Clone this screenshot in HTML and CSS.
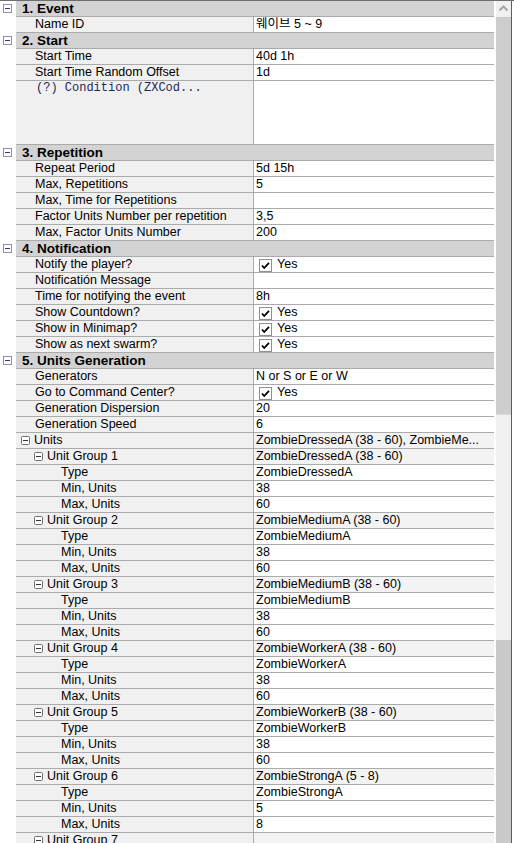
FILE: index.html
```html
<!DOCTYPE html>
<html>
<head>
<meta charset="utf-8">
<link rel="stylesheet" href="styles.css">
</head>
<body>
<div class="frame">
  <div class="grid">
    <div class="row cat"><div class="margin"><svg class="exp" width="9" height="9" viewBox="0 0 9 9"><rect x="0.5" y="0.5" width="8" height="8" fill="#fff" stroke="#8a96aa"/><line x1="2" y1="4.5" x2="7" y2="4.5" stroke="#2c3c64"/></svg></div><div class="label">1. Event</div></div>
    <div class="row"><div class="margin"></div><div class="name">Name ID</div><div class="value">웨이브 5 ~ 9</div></div>
    <div class="row cat"><div class="margin"><svg class="exp" width="9" height="9" viewBox="0 0 9 9"><rect x="0.5" y="0.5" width="8" height="8" fill="#fff" stroke="#8a96aa"/><line x1="2" y1="4.5" x2="7" y2="4.5" stroke="#2c3c64"/></svg></div><div class="label">2. Start</div></div>
    <div class="row"><div class="margin"></div><div class="name">Start Time</div><div class="value">40d 1h</div></div>
    <div class="row"><div class="margin"></div><div class="name">Start Time Random Offset</div><div class="value">1d</div></div>
    <div class="row tall"><div class="margin"></div><div class="name mono">(?) Condition (ZXCod...</div><div class="value"></div></div>
    <div class="row cat"><div class="margin"><svg class="exp" width="9" height="9" viewBox="0 0 9 9"><rect x="0.5" y="0.5" width="8" height="8" fill="#fff" stroke="#8a96aa"/><line x1="2" y1="4.5" x2="7" y2="4.5" stroke="#2c3c64"/></svg></div><div class="label">3. Repetition</div></div>
    <div class="row"><div class="margin"></div><div class="name">Repeat Period</div><div class="value">5d 15h</div></div>
    <div class="row"><div class="margin"></div><div class="name">Max, Repetitions</div><div class="value">5</div></div>
    <div class="row"><div class="margin"></div><div class="name">Max, Time for Repetitions</div><div class="value"></div></div>
    <div class="row"><div class="margin"></div><div class="name">Factor Units Number per repetition</div><div class="value">3,5</div></div>
    <div class="row"><div class="margin"></div><div class="name">Max, Factor Units Number</div><div class="value">200</div></div>
    <div class="row cat"><div class="margin"><svg class="exp" width="9" height="9" viewBox="0 0 9 9"><rect x="0.5" y="0.5" width="8" height="8" fill="#fff" stroke="#8a96aa"/><line x1="2" y1="4.5" x2="7" y2="4.5" stroke="#2c3c64"/></svg></div><div class="label">4. Notification</div></div>
    <div class="row"><div class="margin"></div><div class="name">Notify the player?</div><div class="value"><span class="check"><svg width="13" height="13" viewBox="0 0 13 13"><rect x="0.5" y="0.5" width="12" height="12" fill="#fff" stroke="#8e8f8f"/><path d="M3 6.5 L5.2 9 L10 3.8" fill="none" stroke="#000" stroke-width="1.8"/></svg></span>Yes</div></div>
    <div class="row"><div class="margin"></div><div class="name">Notificatión Message</div><div class="value"></div></div>
    <div class="row"><div class="margin"></div><div class="name">Time for notifying the event</div><div class="value">8h</div></div>
    <div class="row"><div class="margin"></div><div class="name">Show Countdown?</div><div class="value"><span class="check"><svg width="13" height="13" viewBox="0 0 13 13"><rect x="0.5" y="0.5" width="12" height="12" fill="#fff" stroke="#8e8f8f"/><path d="M3 6.5 L5.2 9 L10 3.8" fill="none" stroke="#000" stroke-width="1.8"/></svg></span>Yes</div></div>
    <div class="row"><div class="margin"></div><div class="name">Show in Minimap?</div><div class="value"><span class="check"><svg width="13" height="13" viewBox="0 0 13 13"><rect x="0.5" y="0.5" width="12" height="12" fill="#fff" stroke="#8e8f8f"/><path d="M3 6.5 L5.2 9 L10 3.8" fill="none" stroke="#000" stroke-width="1.8"/></svg></span>Yes</div></div>
    <div class="row"><div class="margin"></div><div class="name">Show as next swarm?</div><div class="value"><span class="check"><svg width="13" height="13" viewBox="0 0 13 13"><rect x="0.5" y="0.5" width="12" height="12" fill="#fff" stroke="#8e8f8f"/><path d="M3 6.5 L5.2 9 L10 3.8" fill="none" stroke="#000" stroke-width="1.8"/></svg></span>Yes</div></div>
    <div class="row cat"><div class="margin"><svg class="exp" width="9" height="9" viewBox="0 0 9 9"><rect x="0.5" y="0.5" width="8" height="8" fill="#fff" stroke="#8a96aa"/><line x1="2" y1="4.5" x2="7" y2="4.5" stroke="#2c3c64"/></svg></div><div class="label">5. Units Generation</div></div>
    <div class="row"><div class="margin"></div><div class="name">Generators</div><div class="value">N or S or E or W</div></div>
    <div class="row"><div class="margin"></div><div class="name">Go to Command Center?</div><div class="value"><span class="check"><svg width="13" height="13" viewBox="0 0 13 13"><rect x="0.5" y="0.5" width="12" height="12" fill="#fff" stroke="#8e8f8f"/><path d="M3 6.5 L5.2 9 L10 3.8" fill="none" stroke="#000" stroke-width="1.8"/></svg></span>Yes</div></div>
    <div class="row"><div class="margin"></div><div class="name">Generation Dispersion</div><div class="value">20</div></div>
    <div class="row"><div class="margin"></div><div class="name">Generation Speed</div><div class="value">6</div></div>
    <div class="row"><div class="margin"></div><div class="name lvl1"><svg class="exp" width="9" height="9" viewBox="0 0 9 9"><rect x="0.5" y="0.5" width="8" height="8" rx="1" fill="#fff" stroke="#6f6f6f"/><line x1="2" y1="4.5" x2="7" y2="4.5" stroke="#333"/></svg>Units</div><div class="value grp">ZombieDressedA (38 - 60), ZombieMe...</div></div>

    <div class="row"><div class="margin"></div><div class="name lvl2"><svg class="exp" width="9" height="9" viewBox="0 0 9 9"><rect x="0.5" y="0.5" width="8" height="8" rx="1" fill="#fff" stroke="#6f6f6f"/><line x1="2" y1="4.5" x2="7" y2="4.5" stroke="#333"/></svg>Unit Group 1</div><div class="value grp">ZombieDressedA (38 - 60)</div></div>
    <div class="row"><div class="margin"></div><div class="name lvl3">Type</div><div class="value">ZombieDressedA</div></div>
    <div class="row"><div class="margin"></div><div class="name lvl3">Min, Units</div><div class="value">38</div></div>
    <div class="row"><div class="margin"></div><div class="name lvl3">Max, Units</div><div class="value">60</div></div>

    <div class="row"><div class="margin"></div><div class="name lvl2"><svg class="exp" width="9" height="9" viewBox="0 0 9 9"><rect x="0.5" y="0.5" width="8" height="8" rx="1" fill="#fff" stroke="#6f6f6f"/><line x1="2" y1="4.5" x2="7" y2="4.5" stroke="#333"/></svg>Unit Group 2</div><div class="value grp">ZombieMediumA (38 - 60)</div></div>
    <div class="row"><div class="margin"></div><div class="name lvl3">Type</div><div class="value">ZombieMediumA</div></div>
    <div class="row"><div class="margin"></div><div class="name lvl3">Min, Units</div><div class="value">38</div></div>
    <div class="row"><div class="margin"></div><div class="name lvl3">Max, Units</div><div class="value">60</div></div>

    <div class="row"><div class="margin"></div><div class="name lvl2"><svg class="exp" width="9" height="9" viewBox="0 0 9 9"><rect x="0.5" y="0.5" width="8" height="8" rx="1" fill="#fff" stroke="#6f6f6f"/><line x1="2" y1="4.5" x2="7" y2="4.5" stroke="#333"/></svg>Unit Group 3</div><div class="value grp">ZombieMediumB (38 - 60)</div></div>
    <div class="row"><div class="margin"></div><div class="name lvl3">Type</div><div class="value">ZombieMediumB</div></div>
    <div class="row"><div class="margin"></div><div class="name lvl3">Min, Units</div><div class="value">38</div></div>
    <div class="row"><div class="margin"></div><div class="name lvl3">Max, Units</div><div class="value">60</div></div>

    <div class="row"><div class="margin"></div><div class="name lvl2"><svg class="exp" width="9" height="9" viewBox="0 0 9 9"><rect x="0.5" y="0.5" width="8" height="8" rx="1" fill="#fff" stroke="#6f6f6f"/><line x1="2" y1="4.5" x2="7" y2="4.5" stroke="#333"/></svg>Unit Group 4</div><div class="value grp">ZombieWorkerA (38 - 60)</div></div>
    <div class="row"><div class="margin"></div><div class="name lvl3">Type</div><div class="value">ZombieWorkerA</div></div>
    <div class="row"><div class="margin"></div><div class="name lvl3">Min, Units</div><div class="value">38</div></div>
    <div class="row"><div class="margin"></div><div class="name lvl3">Max, Units</div><div class="value">60</div></div>

    <div class="row"><div class="margin"></div><div class="name lvl2"><svg class="exp" width="9" height="9" viewBox="0 0 9 9"><rect x="0.5" y="0.5" width="8" height="8" rx="1" fill="#fff" stroke="#6f6f6f"/><line x1="2" y1="4.5" x2="7" y2="4.5" stroke="#333"/></svg>Unit Group 5</div><div class="value grp">ZombieWorkerB (38 - 60)</div></div>
    <div class="row"><div class="margin"></div><div class="name lvl3">Type</div><div class="value">ZombieWorkerB</div></div>
    <div class="row"><div class="margin"></div><div class="name lvl3">Min, Units</div><div class="value">38</div></div>
    <div class="row"><div class="margin"></div><div class="name lvl3">Max, Units</div><div class="value">60</div></div>

    <div class="row"><div class="margin"></div><div class="name lvl2"><svg class="exp" width="9" height="9" viewBox="0 0 9 9"><rect x="0.5" y="0.5" width="8" height="8" rx="1" fill="#fff" stroke="#6f6f6f"/><line x1="2" y1="4.5" x2="7" y2="4.5" stroke="#333"/></svg>Unit Group 6</div><div class="value grp">ZombieStrongA (5 - 8)</div></div>
    <div class="row"><div class="margin"></div><div class="name lvl3">Type</div><div class="value">ZombieStrongA</div></div>
    <div class="row"><div class="margin"></div><div class="name lvl3">Min, Units</div><div class="value">5</div></div>
    <div class="row"><div class="margin"></div><div class="name lvl3">Max, Units</div><div class="value">8</div></div>

    <div class="row"><div class="margin"></div><div class="name lvl2"><svg class="exp" width="9" height="9" viewBox="0 0 9 9"><rect x="0.5" y="0.5" width="8" height="8" rx="1" fill="#fff" stroke="#6f6f6f"/><line x1="2" y1="4.5" x2="7" y2="4.5" stroke="#333"/></svg>Unit Group 7</div><div class="value grp"></div></div>
  </div>
  <div class="scrollbar">
    <div class="arrow"><svg width="15" height="16" viewBox="0 0 15 16"><path d="M3.5 9.5 L7.5 5.5 L11.5 9.5" fill="none" stroke="#a6a6a6" stroke-width="2"/></svg></div>
    <div class="thumb"></div>
    <div class="track"></div>
    <div class="thumb2"></div>
  </div>
  <div class="edge"></div>
</div>
</body>
</html>
```

FILE: styles.css
```css
html, body {
  margin: 0;
  padding: 0;
  background: #ffffff;
}
body {
  width: 514px;
  height: 843px;
  overflow: hidden;
  font-family: "Liberation Sans", "Noto Sans CJK KR", Arial, sans-serif;
  font-size: 12.5px;
  color: #000;
}
.frame {
  display: flex;
  height: 843px;
  box-sizing: border-box;
  border-top: 1px solid #6e6e6e;
}
.grid {
  width: 494px;
  margin-right: 2px;
  display: flex;
  flex-direction: column;
  overflow: hidden;
  flex: none;
}
.row {
  display: flex;
  height: 16px;
  flex: none;
  line-height: 15px;
}
.row.tall {
  height: 64px;
}
.margin {
  width: 16px;
  flex: none;
  display: flex;
  align-items: center;
  padding-left: 3px;
  box-sizing: border-box;
  height: 15px;
}
.exp {
  display: block;
  flex: none;
}
.cat .label {
  flex: 1;
  background: #d3d3d3;
  border-bottom: 1px solid #ababab;
  font-weight: bold;
  font-size: 13.5px;
  padding-left: 6px;
  white-space: nowrap;
  overflow: hidden;
}
.name {
  flex: none;
  background: #f0f0f0;
  border-bottom: 1px solid #ababab;
  border-right: 1px solid #ababab;
  padding-left: 19px;
  box-sizing: border-box;
  width: 238px;
  white-space: nowrap;
  overflow: hidden;
  display: flex;
  align-items: flex-start;
}
.name.lvl1 {
  padding-left: 5px;
}
.name.lvl2 {
  padding-left: 18px;
}
.name.lvl3 {
  padding-left: 45px;
}
.name .exp {
  margin-top: 3px;
  margin-right: 4px;
}
.name.mono {
  font-family: "Liberation Mono", "Courier New", monospace;
  font-size: 12px;
  color: #1e2858;
  padding-left: 20px;
}
.value {
  flex: 1;
  background: #ffffff;
  border-bottom: 1px solid #ababab;
  padding-left: 2px;
  white-space: nowrap;
  overflow: hidden;
  display: flex;
  align-items: flex-start;
}
.value.grp {
  background: #f3f3f3;
}
.check {
  display: block;
  width: 13px;
  height: 13px;
  margin: 2px 5px 0 3px;
}
.check svg {
  display: block;
}
.scrollbar {
  width: 15px;
  flex: none;
  display: flex;
  flex-direction: column;
  background: #f0f0f0;
}
.arrow {
  height: 16px;
  flex: none;
  background: #f0f0f0;
}
.arrow svg {
  display: block;
}
.thumb {
  height: 398px;
  flex: none;
  background: #cdcdcd;
  border-bottom: 1px solid #dadada;
  box-sizing: border-box;
}
.track {
  height: 225px;
  flex: none;
  background: #f0f0f0;
}
.thumb2 {
  flex: 1;
  background: #c9c9c9;
}
.edge {
  width: 1px;
  flex: none;
  background: #5c5c5c;
  margin-right: 2px;
}
```
